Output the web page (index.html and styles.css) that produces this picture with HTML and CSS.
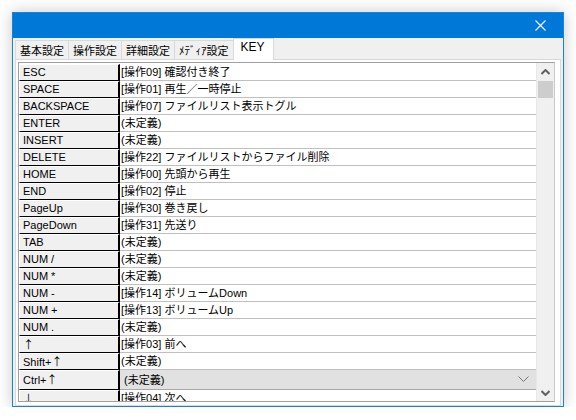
FILE: index.html
```html
<!DOCTYPE html>
<html lang="ja">
<head>
<meta charset="utf-8">
<link rel="stylesheet" href="styles.css">
</head>
<body>
<div class="window">
  <div class="titlebar">
    <div class="close">
      <svg width="11" height="11" viewBox="0 0 11 11"><path d="M0.5 0.5L10.5 10.5M10.5 0.5L0.5 10.5" stroke="#fff" stroke-width="1.1" fill="none"/></svg>
    </div>
  </div>
  <div class="client">
    <div class="tabs">
      <div class="tab">基本設定</div>
      <div class="tab">操作設定</div>
      <div class="tab">詳細設定</div>
      <div class="tab">ﾒﾃﾞｨｱ設定</div>
      <div class="tab active">KEY</div>
    </div>
    <div class="panel">
      <div class="grid">
        <div class="rows">
          <div class="row"><div class="key">ESC</div><div class="val">[操作09] 確認付き終了</div></div>
          <div class="row"><div class="key">SPACE</div><div class="val">[操作01] 再生／一時停止</div></div>
          <div class="row"><div class="key">BACKSPACE</div><div class="val">[操作07] ファイルリスト表示トグル</div></div>
          <div class="row"><div class="key">ENTER</div><div class="val">(未定義)</div></div>
          <div class="row"><div class="key">INSERT</div><div class="val">(未定義)</div></div>
          <div class="row"><div class="key">DELETE</div><div class="val">[操作22] ファイルリストからファイル削除</div></div>
          <div class="row"><div class="key">HOME</div><div class="val">[操作00] 先頭から再生</div></div>
          <div class="row"><div class="key">END</div><div class="val">[操作02] 停止</div></div>
          <div class="row"><div class="key">PageUp</div><div class="val">[操作30] 巻き戻し</div></div>
          <div class="row"><div class="key">PageDown</div><div class="val">[操作31] 先送り</div></div>
          <div class="row"><div class="key">TAB</div><div class="val">(未定義)</div></div>
          <div class="row"><div class="key">NUM /</div><div class="val">(未定義)</div></div>
          <div class="row"><div class="key">NUM *</div><div class="val">(未定義)</div></div>
          <div class="row"><div class="key">NUM -</div><div class="val">[操作14] ボリュームDown</div></div>
          <div class="row"><div class="key">NUM +</div><div class="val">[操作13] ボリュームUp</div></div>
          <div class="row"><div class="key">NUM .</div><div class="val">(未定義)</div></div>
          <div class="row"><div class="key"><span class="arr">↑</span></div><div class="val">[操作03] 前へ</div></div>
          <div class="row"><div class="key">Shift+<span class="arr">↑</span></div><div class="val">(未定義)</div></div>
          <div class="row combo-row"><div class="key">Ctrl+<span class="arr">↑</span></div><div class="val combo"><span>(未定義)</span>
            <svg width="11" height="7" viewBox="0 0 11 7"><path d="M0.5 0.5L5.5 5.5L10.5 0.5" stroke="#777" stroke-width="1" fill="none"/></svg></div></div>
          <div class="row"><div class="key"><span class="arr">↓</span></div><div class="val">[操作04] 次へ</div></div>
        </div>
        <div class="scrollbar">
          <div class="sb-btn"><svg width="9" height="6" viewBox="0 0 9 6"><path d="M0.5 5L4.5 1L8.5 5" stroke="#606060" stroke-width="2" fill="none"/></svg></div>
          <div class="sb-track"><div class="sb-thumb"></div></div>
          <div class="sb-btn"><svg width="9" height="6" viewBox="0 0 9 6"><path d="M0.5 1L4.5 5L8.5 1" stroke="#606060" stroke-width="2" fill="none"/></svg></div>
        </div>
      </div>
    </div>
  </div>
</div>
</body>
</html>
```
FILE: styles.css
```css
html, body {
  margin: 0;
  padding: 0;
  background: #ffffff;
}
body {
  font-family: "Liberation Sans", "Noto Sans CJK JP", sans-serif;
  font-size: 11px;
  color: #000;
}
.window {
  margin: 12px 0 0 12px;
  width: 550px;
  height: 393px;
  border: 1px solid #1a82d8;
  box-shadow: 0 0 14px rgba(0, 0, 0, 0.22);
  display: flex;
  flex-direction: column;
  background: #f0f0f0;
}
.titlebar {
  height: 25px;
  background: #0078d7;
  display: flex;
  justify-content: flex-end;
  align-items: center;
}
.close {
  width: 46px;
  height: 25px;
  display: flex;
  align-items: center;
  justify-content: center;
}
.client {
  flex: 1;
  display: flex;
  flex-direction: column;
  padding: 0 2px 0 2px;
  min-height: 0;
}
.tabs {
  display: flex;
  align-items: flex-end;
  height: 21px;
  padding-left: 0;
}
.tab {
  height: 19px;
  padding: 0 4px 0 4px;
  display: flex;
  align-items: center;
  border: 1px solid #d9d9d9;
  border-bottom: none;
  margin-right: -1px;
  font-size: 11px;
  font-family: "Noto Sans CJK JP", sans-serif;
  background: #f0f0f0;
  box-sizing: border-box;
}
.tab.active {
  height: 22px;
  background: #ffffff;
  padding: 0 8px 0 7px;
  align-items: flex-start;
  padding-top: 1px;
  font-family: "Liberation Sans", sans-serif;
  font-size: 12px;
  border-color: #d9d9d9;
  position: relative;
  z-index: 1;
  margin-bottom: -1px;
}
.panel {
  flex: 1;
  min-height: 0;
  background: #ffffff;
  border: 1px solid #d9d9d9;
  padding: 2px 5px 3px 2px;
  display: flex;
}
.grid {
  flex: 1;
  display: flex;
  border: 1px solid #a0a0a0;
  border-right-color: #c8c8c8;
  background: #ffffff;
  overflow: hidden;
}
.rows {
  flex: 1;
  overflow: hidden;
  padding-top: 1px;
}
.row {
  display: flex;
  height: 17px;
}
.key {
  width: 101px;
  flex: none;
  box-sizing: border-box;
  background: #f0f0f0;
  border-top: 1px solid #ffffff;
  border-left: 1px solid #ffffff;
  border-bottom: 1px solid #000000;
  border-right: 2px solid #000000;
  padding-left: 3px;
  line-height: 15px;
  white-space: nowrap;
}
.arr {
  font-family: "Noto Sans CJK JP", sans-serif;
  font-size: 11px;
}
.val {
  flex: 1;
  box-sizing: border-box;
  border-bottom: 1px solid #c0c0c0;
  padding-left: 1px;
  line-height: 16px;
  white-space: nowrap;
}
.combo-row {
  height: 20px;
}
.combo-row .key {
  line-height: 17px;
}
.val.combo {
  background: #e1e1e1;
  border-bottom: 1px solid #a8a8a8;
  display: flex;
  align-items: center;
  justify-content: space-between;
  padding-left: 4px;
  padding-right: 7px;
}
.scrollbar {
  width: 17px;
  flex: none;
  background: #f0f0f0;
  display: flex;
  flex-direction: column;
  border-left: 1px solid #e8e8e8;
}
.sb-btn {
  height: 17px;
  display: flex;
  align-items: center;
  justify-content: center;
}
.sb-track {
  flex: 1;
  padding-top: 1px;
}
.sb-thumb {
  height: 17px;
  margin: 0 1px;
  background: #cdcdcd;
}
```
